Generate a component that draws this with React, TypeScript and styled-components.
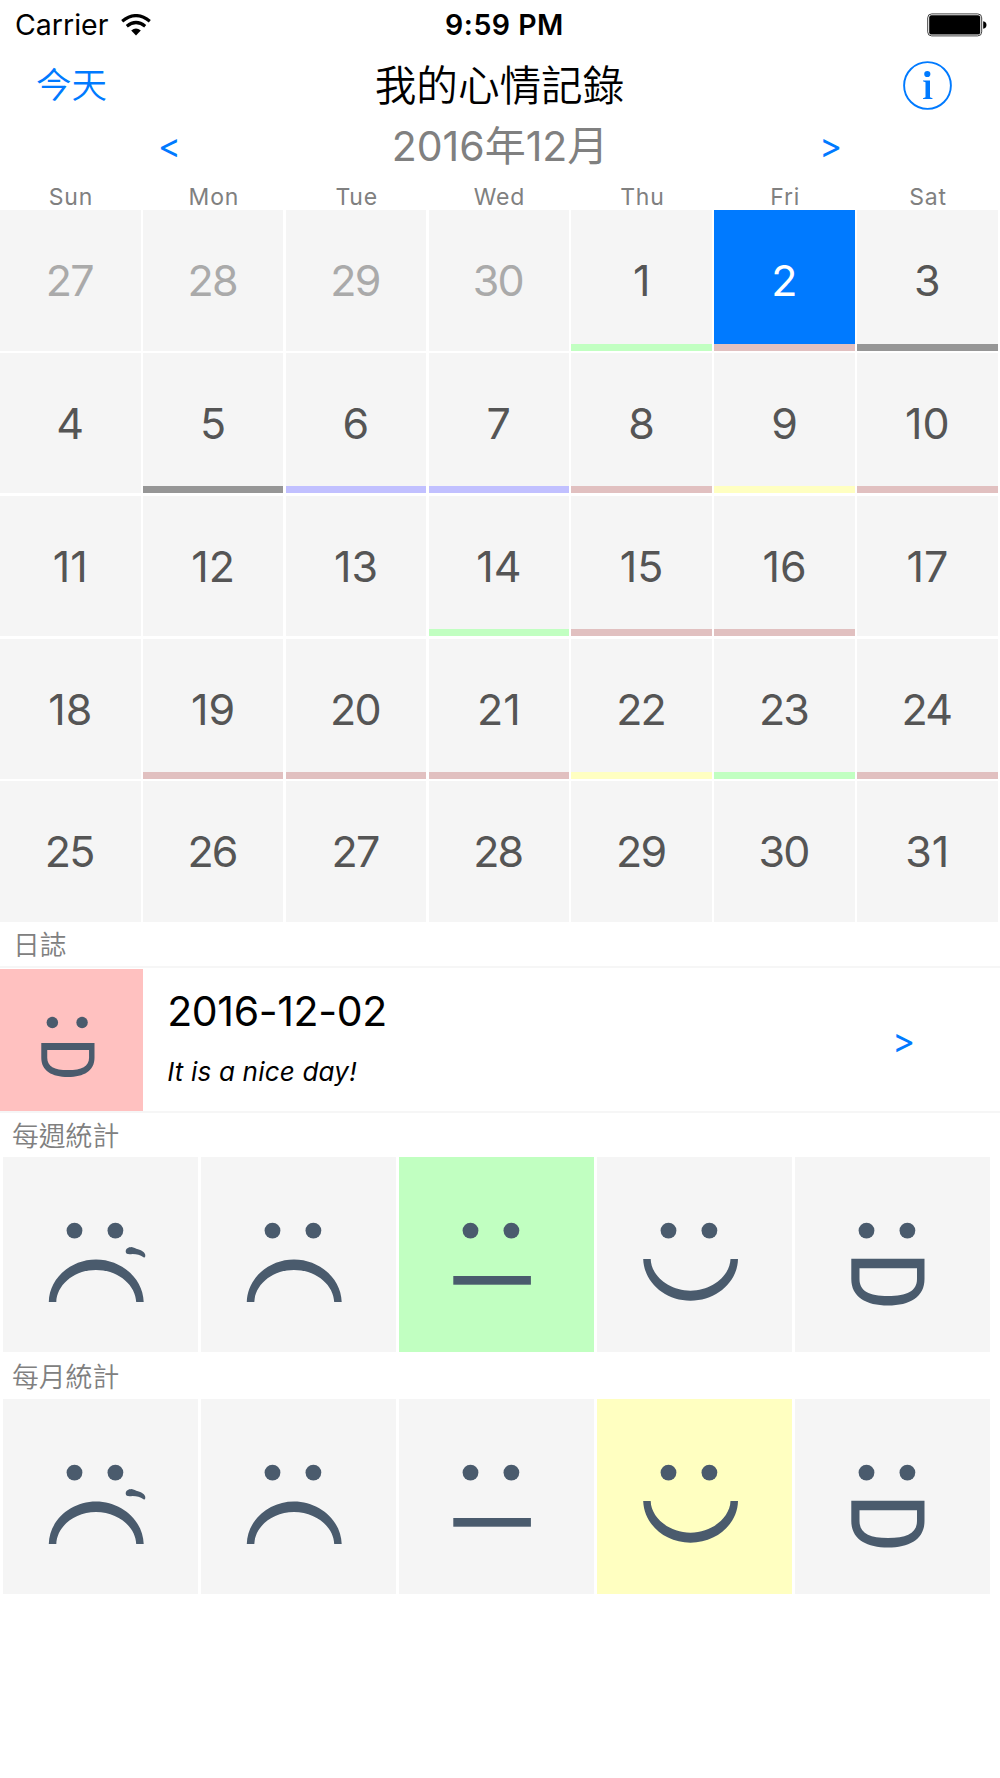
import React from "react";
import styled, { createGlobalStyle } from "styled-components";

const BLUE = "#007aff";
const INK = "#4a5b6d";
const MOOD = {
  red: "#e1c0c0",
  green: "#c1ffc1",
  gray: "#969696",
  violet: "#c1c0ff",
  yellow: "#ffffc1",
};
type Mood = keyof typeof MOOD;

const GlobalStyle = createGlobalStyle`
  body {
    margin: 0;
    background: #fff;
    font-family: Inter, "Noto Sans CJK TC", sans-serif;
  }
  *, *::before, *::after { box-sizing: border-box; }
  button { border: 0; padding: 0; background: none; font: inherit; color: inherit; }
`;

const Screen = styled.main`
  width: 1000px;
  height: 1778px;
  overflow: hidden;
  background: #fff;
  display: flex;
  flex-direction: column;
`;

const StatusBar = styled.header`
  height: 50px;
  padding: 0 13px 0 15px;
  display: grid;
  grid-template-columns: 1fr auto 1fr;
  align-items: center;
  font-size: 28.5px;
  line-height: 50px;
`;

const Carrier = styled.div`
  display: flex;
  align-items: center;
  gap: 13px;
`;

const Clock = styled.div`
  margin-left: 7px;
  font-weight: 600;
  letter-spacing: 0.5px;
`;

const Battery = styled.div`
  display: flex;
  justify-content: flex-end;
`;

const NavBar = styled.nav`
  height: 68px;
  padding: 0 48px 0 36px;
  display: grid;
  grid-template-columns: 1fr auto 1fr;
  align-items: center;
`;

const TodayButton = styled.button`
  justify-self: start;
  padding-top: 2px;
  color: ${BLUE};
  font-size: 35.5px;
  font-weight: 350;
  line-height: 68px;
`;

const Title = styled.h1`
  margin: 0 0 0 11px;
  padding-top: 2px;
  font-size: 41.6px;
  font-weight: 350;
  line-height: 68px;
`;

const InfoButton = styled.button`
  justify-self: end;
  display: flex;
`;

const MonthBar = styled.div`
  height: 55px;
  padding: 0 158px;
  display: flex;
  align-items: center;
  justify-content: space-between;
`;

const MonthName = styled.h2`
  margin: 0;
  color: #808080;
  font-size: 41px;
  font-weight: 400;
  line-height: 54px;
`;

const Arrow = styled.button`
  color: ${BLUE};
  font-size: 34.5px;
  font-weight: 400;
  line-height: 54px;
`;

const Weekdays = styled.div`
  height: 37px;
  padding-top: 11px;
  display: grid;
  grid-template-columns: repeat(7, 142.857px);
`;

const Weekday = styled.span`
  width: 142px;
  color: #808080;
  font-size: 23px;
  letter-spacing: 0.8px;
  line-height: 26px;
  text-align: center;
`;

const Days = styled.div`
  height: 712px;
  display: grid;
  grid-template-columns: repeat(7, 142.857px);
  grid-auto-rows: 142.857px;
`;

const Day = styled.div<{ $muted?: boolean; $selected?: boolean; $mood?: Mood; $tight?: boolean }>`
  width: 140.5px;
  height: 140.5px;
  background: ${(p) => (p.$selected ? BLUE : "#f5f5f5")};
  border-bottom: ${(p) => (p.$mood ? `7px solid ${MOOD[p.$mood]}` : "none")};
  color: ${(p) => (p.$selected ? "#fff" : p.$muted ? "#aaa" : "#555")};
  font-size: 43px;
  letter-spacing: ${(p) => (p.$tight ? "-1.8px" : "0")};
  text-indent: ${(p) => (p.$tight ? "-2px" : "0")};
  line-height: 140px;
  text-align: center;
`;

const SectionLabel = styled.h3<{ $height: number; $indent: number }>`
  margin: 0;
  height: ${(p) => p.$height}px;
  padding: 1px 0 0 ${(p) => p.$indent}px;
  color: #808080;
  font-size: 26.8px;
  font-weight: 350;
  line-height: ${(p) => p.$height}px;
`;

const Entry = styled.section`
  height: 147px;
  border-top: 2px solid #f6f6f6;
  border-bottom: 2px solid #f6f6f6;
  display: flex;
  align-items: center;
`;

const EntryFace = styled.div`
  width: 142.7px;
  height: 142px;
  margin-top: 1px;
  background: #ffc1c0;
`;

const EntryText = styled.div`
  flex: 1;
  padding-left: 24.5px;
`;

const EntryDate = styled.div`
  margin-top: -2px;
  font-size: 41px;
  letter-spacing: -0.35px;
  line-height: 50px;
`;

const EntryNote = styled.div`
  margin-top: 16px;
  font-size: 26px;
  font-style: italic;
  letter-spacing: 0.2px;
  line-height: 40px;
`;

const EntryArrow = styled(Arrow)`
  margin: 2px 85px 0 0;
`;

const FaceRow = styled.div`
  height: 196px;
  padding-left: 3px;
  display: grid;
  grid-template-columns: repeat(5, 198px);
`;

const FaceTile = styled.div<{ $color?: string }>`
  width: 195.3px;
  height: 195.3px;
  background: ${(p) => p.$color ?? "#f5f5f5"};
`;

type Expression = "crying" | "sad" | "neutral" | "happy" | "grin";

const FROWN =
  "M45.800 145C46.300 121 68 102.500 93 102.500C118 102.500 140 121 140.700 145H133.200C132.700 128 115 112.900 93 112.900C71 112.900 53.800 128 53.300 145Z";
const TEAR =
  "M122.700 94.500C122.700 91.500 125.500 90.200 128.500 90C131 90.500 132.500 91.500 135 92.300C139 93.500 142.300 95.500 142.300 98.500C142.300 100.500 141.300 101 140.500 100.300C137 98 134 97 129.500 97C126 97.500 122.700 97.500 122.700 94.500Z";

const MOUTHS: Record<Expression, React.ReactNode> = {
  crying: (
    <>
      <path d={FROWN} />
      <path d={TEAR} />
    </>
  ),
  sad: <path d={FROWN} />,
  neutral: <rect x="54.300" y="119" width="77.600" height="8.700" />,
  happy: (
    <path d="M46.200 102C47 125.500 68 143.700 93.500 143.700C119 143.700 140.500 125.500 141 102H133.500C133 118.500 115 133.700 93.500 133.700C72 133.700 54 118.500 53.700 102Z" />
  ),
  grin: (
    <path
      fillRule="evenodd"
      d="M56.300 101.700H129.500V122C129.500 140 115 148.500 93 148.500C71 148.500 56.300 140 56.300 122ZM64.500 111.300V122C64.500 134 74 139 93 139C112 139 122 134 122 122V111.300Z"
    />
  ),
};

const Face = ({ kind }: { kind: Expression }) => (
  <svg width="100%" height="100%" viewBox="0 0 195.3 195.3" fill={INK} display="block">
    <circle cx="71.500" cy="73.600" r="7.900" />
    <circle cx="112.400" cy="73.600" r="7.900" />
    {MOUTHS[kind]}
  </svg>
);

const WifiIcon = () => (
  <svg width="30" height="22" viewBox="0 0 30 22">
    <g fill="none" stroke="#000" strokeWidth="3.200">
      <path d="M1.200 7.200Q15 -4 28.800 7.200" />
      <path d="M5.800 12.200Q15 4.800 24.200 12.200" />
    </g>
    <path d="M15 21.500L10.200 16.500Q15 12.700 19.800 16.500Z" />
  </svg>
);

const BatteryIcon = () => (
  <svg width="60" height="24" viewBox="0 0 60 24">
    <rect x="0.700" y="0.900" width="54" height="22" rx="4" fill="#fff" stroke="#444" />
    <rect x="2.200" y="2.200" width="51" height="19.400" rx="2.200" />
    <path d="M56.200 8.200Q59.500 9 59.500 12T56.200 15.800Z" />
  </svg>
);

const InfoIcon = () => (
  <svg width="49" height="49" viewBox="0 0 49 49" fill={BLUE}>
    <circle cx="24.500" cy="24.500" r="23.400" fill="none" stroke={BLUE} strokeWidth="1.900" />
    <circle cx="24.300" cy="13" r="3.100" />
    <path d="M20 19.500H27V36.300L29.500 37.200V38H20V37.200L22.500 36.300V21.200L20 20.300Z" />
  </svg>
);

const WEEKDAYS = ["Sun", "Mon", "Tue", "Wed", "Thu", "Fri", "Sat"];
const LEADING = [27, 28, 29, 30];
const MONTH = Array.from({ length: 31 }, (_, i) => i + 1);
const SELECTED = 2;
const MOODS: Record<number, Mood> = {
  1: "green", 2: "red", 3: "gray", 5: "gray", 6: "violet", 7: "violet",
  8: "red", 9: "yellow", 10: "red", 14: "green", 15: "red", 16: "red",
  19: "red", 20: "red", 21: "red", 22: "yellow", 23: "green", 24: "red",
};
const EXPRESSIONS: Expression[] = ["crying", "sad", "neutral", "happy", "grin"];

// Pairs of wide digits are tracked closer than pairs that contain a "1".
const isWidePair = (day: number) => day > 9 && !String(day).includes("1");

const Stats = ({ active, color }: { active: Expression; color: string }) => (
  <FaceRow>
    {EXPRESSIONS.map((kind) => (
      <FaceTile key={kind} $color={kind === active ? color : undefined}>
        <Face kind={kind} />
      </FaceTile>
    ))}
  </FaceRow>
);

export default function App() {
  return (
    <Screen>
      <GlobalStyle />
      <StatusBar>
        <Carrier>
          Carrier
          <WifiIcon />
        </Carrier>
        <Clock>9:59 PM</Clock>
        <Battery>
          <BatteryIcon />
        </Battery>
      </StatusBar>
      <NavBar>
        <TodayButton>今天</TodayButton>
        <Title>我的心情記錄</Title>
        <InfoButton aria-label="Info">
          <InfoIcon />
        </InfoButton>
      </NavBar>
      <MonthBar>
        <Arrow>&lt;</Arrow>
        <MonthName>2016年12月</MonthName>
        <Arrow>&gt;</Arrow>
      </MonthBar>
      <Weekdays>
        {WEEKDAYS.map((name) => (
          <Weekday key={name}>{name}</Weekday>
        ))}
      </Weekdays>
      <Days>
        {LEADING.map((day) => (
          <Day key={`lead-${day}`} $muted $tight={isWidePair(day)}>
            {day}
          </Day>
        ))}
        {MONTH.map((day) => (
          <Day
            key={day}
            $selected={day === SELECTED}
            $mood={MOODS[day]}
            $tight={isWidePair(day)}
          >
            {day}
          </Day>
        ))}
      </Days>
      <SectionLabel $height={44} $indent={13}>日誌</SectionLabel>
      <Entry>
        <EntryFace>
          <Face kind="grin" />
        </EntryFace>
        <EntryText>
          <EntryDate>2016-12-02</EntryDate>
          <EntryNote>It is a nice day!</EntryNote>
        </EntryText>
        <EntryArrow>&gt;</EntryArrow>
      </Entry>
      <SectionLabel $height={44} $indent={12}>每週統計</SectionLabel>
      <Stats active="neutral" color={MOOD.green} />
      <SectionLabel $height={46} $indent={12}>每月統計</SectionLabel>
      <Stats active="happy" color={MOOD.yellow} />
    </Screen>
  );
}
